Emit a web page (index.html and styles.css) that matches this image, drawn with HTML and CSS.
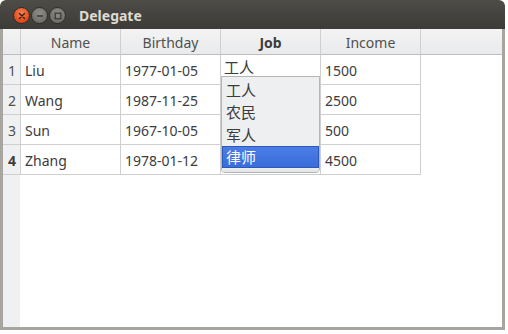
FILE: index.html
```html
<!DOCTYPE html>
<html>
<head>
<meta charset="utf-8">
<link rel="stylesheet" href="styles.css">
</head>
<body>
<div class="window">
  <div class="titlebar">
    <div class="buttons">
      <span class="btn close"><svg width="8" height="8" viewBox="0 0 8 8"><path d="M1.5 1.5L6.5 6.5M6.5 1.5L1.5 6.5" stroke="#3a1a0c" stroke-width="1.4" stroke-linecap="round"/></svg></span>
      <span class="btn min"><svg width="8" height="8" viewBox="0 0 8 8"><path d="M1 4H7" stroke="#3b3a36" stroke-width="1.6"/></svg></span>
      <span class="btn max"><svg width="8" height="8" viewBox="0 0 8 8"><rect x="1.2" y="1.2" width="5.6" height="5.6" fill="none" stroke="#3b3a36" stroke-width="1.3"/></svg></span>
    </div>
    <div class="title">Delegate</div>
  </div>
  <div class="content">
    <div class="grid">
      <div class="corner"></div>
      <div class="hh">Name</div>
      <div class="hh">Birthday</div>
      <div class="hh cur">Job</div>
      <div class="hh">Income</div>
      <div class="hh fill"></div>

      <div class="vh">1</div>
      <div class="c">Liu</div>
      <div class="c">1977-01-05</div>
      <div class="c editor">工人</div>
      <div class="c">1500</div>
      <div class="fillc"></div>

      <div class="vh">2</div>
      <div class="c">Wang</div>
      <div class="c">1987-11-25</div>
      <div class="c"></div>
      <div class="c">2500</div>
      <div class="fillc"></div>

      <div class="vh">3</div>
      <div class="c">Sun</div>
      <div class="c">1967-10-05</div>
      <div class="c"></div>
      <div class="c">500</div>
      <div class="fillc"></div>

      <div class="vh cur">4</div>
      <div class="c">Zhang</div>
      <div class="c">1978-01-12</div>
      <div class="c"></div>
      <div class="c">4500</div>
      <div class="fillc"></div>
    </div>
    <div class="popup">
      <div class="item">工人</div>
      <div class="item">农民</div>
      <div class="item">军人</div>
      <div class="item sel">律师</div>
      <div class="foot"></div>
    </div>
  </div>
</div>
</body>
</html>
```

FILE: styles.css
```css
html, body {
  margin: 0;
  padding: 0;
  background: #ffffff;
}
body {
  width: 508px;
  height: 334px;
  font-family: "Noto Sans", "Noto Sans CJK SC", sans-serif;
}
.window {
  width: 505px;
  height: 330px;
  box-sizing: border-box;
  display: flex;
  flex-direction: column;
  border-radius: 6px 6px 0 0;
  background: #a8a5a1;
  overflow: hidden;
}
.titlebar {
  height: 29px;
  flex: none;
  display: flex;
  align-items: center;
  background: linear-gradient(#4d4c47, #3c3b37);
  border-radius: 6px 6px 0 0;
}
.buttons {
  display: flex;
  gap: 1px;
  margin-left: 13px;
  padding-top: 2px;
}
.btn {
  width: 17px;
  height: 17px;
  border-radius: 50%;
  display: flex;
  align-items: center;
  justify-content: center;
  box-sizing: border-box;
  border: 1px solid #2f2e2b;
}
.close {
  background: radial-gradient(circle at 50% 35%, #f6845a, #e5501d 60%, #c8400f);
}
.min, .max {
  background: radial-gradient(circle at 50% 35%, #8f8d87, #74726c 65%, #5f5e59);
}
.title {
  margin-left: 13px;
  color: #dfdbd2;
  font-weight: bold;
  font-size: 14px;
  padding-top: 1px;
}
.content {
  position: relative;
  flex: 1;
  margin: 0 3px 3px 3px;
  background: linear-gradient(to right, #eff0f1 0, #eff0f1 17px, #ffffff 17px);
}
.grid {
  display: grid;
  grid-template-columns: 18px 100px 100px 100px 100px 1fr;
  grid-template-rows: 26px repeat(4, 30px);
  font-size: 14px;
  color: #3c3c3c;
}
.corner, .hh {
  background: linear-gradient(#f3f3f4, #e9eaeb);
  border-right: 1px solid #cfcfcf;
  border-bottom: 1px solid #bdbdbd;
  box-sizing: border-box;
}
.hh {
  display: flex;
  align-items: center;
  justify-content: center;
  color: #505050;
  padding-top: 1px;
}
.hh.cur {
  font-weight: bold;
  color: #3c3c3c;
}
.hh.fill {
  border-right: none;
}
.vh {
  background: #eff0f1;
  border-right: 1px solid #cfcfcf;
  border-bottom: 1px solid #cfcfcf;
  box-sizing: border-box;
  display: flex;
  align-items: center;
  justify-content: center;
  color: #505050;
  padding-top: 2px;
  padding-left: 1px;
}
.vh.cur {
  font-weight: bold;
  color: #3c3c3c;
}
.c {
  border-right: 1px solid #cfcfcf;
  border-bottom: 1px solid #cfcfcf;
  box-sizing: border-box;
  display: flex;
  align-items: center;
  padding-left: 4px;
  padding-top: 2px;
  background: #ffffff;
}
.c.editor {
  align-items: flex-start;
  padding-top: 1px;
  padding-left: 3px;
  font-size: 15px;
}
.fillc {
  background: #ffffff;
}
.popup {
  position: absolute;
  left: 218px;
  top: 47px;
  width: 99px;
  height: 97px;
  box-sizing: border-box;
  background: #eeeff1;
  border: 1px solid #b5b5b5;
  border-radius: 0 0 4px 4px;
  font-size: 15px;
  color: #3c3c3c;
  display: flex;
  flex-direction: column;
  padding-top: 1px;
}
.item {
  height: 22.5px;
  display: flex;
  align-items: center;
  padding-left: 4px;
  box-sizing: border-box;
}
.item.sel {
  background: linear-gradient(#4c7de6, #3a6ddb);
  border: 1px solid #2c58b8;
  color: #ffffff;
  padding-left: 3px;
  height: 22px;
}
.foot {
  flex: 1;
  background: linear-gradient(#eeeff1, #e2e3e4);
  border-radius: 0 0 3px 3px;
}
```
